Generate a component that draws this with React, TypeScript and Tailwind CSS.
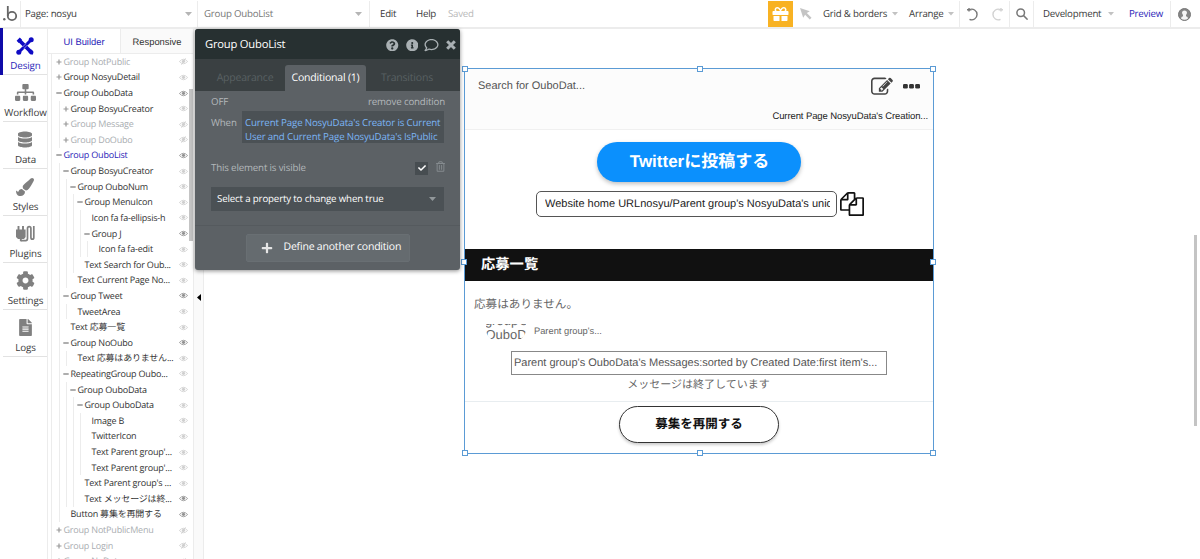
import React from "react";
import {
  FaCheck,
  FaCog,
  FaDatabase,
  FaFileAlt,
  FaGift,
  FaInfoCircle,
  FaPaintBrush,
  FaPlus,
  FaQuestionCircle,
  FaRegComment,
  FaRegTrashAlt,
  FaSitemap,
} from "react-icons/fa";

type Row = {
  depth: number;
  label: string;
  mark?: "+" | "-";
  tone?: "muted" | "active";
  eye?: "on" | "off";
};

const rows: Row[] = [
  { depth: 0, label: "Group NotPublic", mark: "+", tone: "muted", eye: "off" },
  { depth: 0, label: "Group NosyuDetail", mark: "+" },
  { depth: 0, label: "Group OuboData", mark: "-", eye: "on" },
  { depth: 1, label: "Group BosyuCreator", mark: "+" },
  { depth: 1, label: "Group Message", mark: "+", tone: "muted", eye: "off" },
  { depth: 1, label: "Group DoOubo", mark: "+", tone: "muted", eye: "off" },
  { depth: 0, label: "Group OuboList", mark: "-", tone: "active", eye: "on" },
  { depth: 1, label: "Group BosyuCreator", mark: "-" },
  { depth: 2, label: "Group OuboNum", mark: "-" },
  { depth: 3, label: "Group MenuIcon", mark: "-" },
  { depth: 4, label: "Icon fa fa-ellipsis-h" },
  { depth: 4, label: "Group J", mark: "-", eye: "on" },
  { depth: 5, label: "Icon fa fa-edit" },
  { depth: 3, label: "Text Search for Oub..." },
  { depth: 2, label: "Text Current Page No..." },
  { depth: 1, label: "Group Tweet", mark: "-", eye: "on" },
  { depth: 2, label: "TweetArea" },
  { depth: 1, label: "Text 応募一覧" },
  { depth: 1, label: "Group NoOubo", mark: "-", eye: "on" },
  { depth: 2, label: "Text 応募はありません..." },
  { depth: 1, label: "RepeatingGroup Oubo...", mark: "-" },
  { depth: 2, label: "Group OuboData", mark: "-" },
  { depth: 3, label: "Group OuboData", mark: "-" },
  { depth: 4, label: "Image B" },
  { depth: 4, label: "TwitterIcon" },
  { depth: 4, label: "Text Parent group'..." },
  { depth: 4, label: "Text Parent group'..." },
  { depth: 3, label: "Text Parent group's ..." },
  { depth: 3, label: "Text メッセージは終...", eye: "on" },
  { depth: 1, label: "Button 募集を再開する", eye: "on" },
  { depth: 0, label: "Group NotPublicMenu", mark: "+", tone: "muted", eye: "off" },
  { depth: 0, label: "Group Login", mark: "+", tone: "muted", eye: "off" },
  { depth: 0, label: "Group NoData", mark: "+", tone: "muted", eye: "off" },
];

function Eye({ state }: { state?: "on" | "off" }) {
  const color = state === "on" ? "text-[#929292]" : "text-[#cfcfcf]";
  return (
    <svg viewBox="0 0 9 7" className={`h-[7px] w-[9px] shrink-0 ${color}`} fill="none" stroke="currentColor">
      <path d="M.4 3.500Q4.500-1 8.600 3.500 4.500 8 .4 3.500z" strokeWidth=".8" />
      <circle cx="4.500" cy="3.300" r="1.600" fill="currentColor" stroke="none" />
      {state === "off" && <path d="M2.500 6.700l4-6.400" strokeWidth=".9" />}
    </svg>
  );
}

function TreeRow({ row }: { row: Row }) {
  const color =
    row.tone === "muted" ? "text-[#a9adb1]" : row.tone === "active" ? "text-[#2b25b8]" : "text-[#333]";
  return (
    <div className="flex h-[15.61px] shrink-0 items-center pr-[1.5px] pl-[4px]">
      {Array.from({ length: row.depth }, (_, i) => (
        <span key={i} className="flex h-full w-[7px] shrink-0 pl-[3px]">
          <span className="h-full w-px bg-[#ececec]" />
        </span>
      ))}
      <span className="flex w-[7.5px] shrink-0 items-center">
        {row.mark && (
          <svg viewBox="0 0 6 6" className="size-[6px]" stroke={row.mark === "-" ? "#777" : "#999"} strokeWidth="1.2">
            <path d={row.mark === "+" ? "M.5 3h5M3 .5v5" : "M.3 3h5.4"} />
          </svg>
        )}
      </span>
      <span className={`w-0 grow whitespace-nowrap text-[9px] leading-[14px] tracking-[-0.2px] ${color}`}>
        {row.label}
      </span>
      <Eye state={row.eye} />
    </div>
  );
}

function DesignIcon() {
  return (
    <svg viewBox="0 0 18 18" className="size-[18px]" fill="#0f0bc4" stroke="#0f0bc4">
      <path d="M3 3l12 12" strokeWidth="3.8" />
      <path d="M15 3L3 15" strokeWidth="3" />
      <path d="M6.500 10l3.500-3.500M8 11.500l3.500-3.500" stroke="#fff" strokeWidth=".5" />
      <path d="M.6 3.8L3.8.6 6 2.8 2.8 6zM12.2 15L15 12.2l2.4 2.4-.4 2.8-2.4.2z" stroke="none" />
      <circle cx="15.2" cy="2.8" r="2.500" stroke="none" />
      <circle cx="2.8" cy="15.2" r="2.500" stroke="none" />
      <circle cx="15.2" cy="15.2" r="1.900" stroke="none" />
    </svg>
  );
}

function PluginIcon() {
  return (
    <svg viewBox="0 0 19 17" className="h-[17px] w-[19px]" fill="none" stroke="#808080">
      <path d="M0 4.500h9.600v7.500L8 14H2l-2-2z" fill="#808080" stroke="none" />
      <path d="M2.500 1v4M7 1v4M4.800 13v3.300" strokeWidth="1.900" />
      <path d="M4.800 15.600h4.900q1.800 0 1.800-2V3.600q0-2 1.700-2t1.700 2v8.600q0 2 1.500 2t1.400-2V1" strokeWidth="1.700" />
    </svg>
  );
}

const rail = [
  { label: "Design", icon: <DesignIcon />, active: true },
  { label: "Workflow", icon: <FaSitemap className="h-[19px] w-[21px]" /> },
  { label: "Data", icon: <FaDatabase className="h-[17px] w-[14px]" /> },
  { label: "Styles", icon: <FaPaintBrush className="size-[18px]" /> },
  { label: "Plugins", icon: <PluginIcon /> },
  { label: "Settings", icon: <FaCog className="size-[19px]" /> },
  { label: "Logs", icon: <FaFileAlt className="h-[17px] w-[13px]" /> },
];

function Caret({ className = "h-[4px] w-[7px]" }: { className?: string }) {
  return (
    <svg viewBox="0 0 7 4" className={`shrink-0 ${className}`} fill="currentColor">
      <path d="M0 0h7L3.500 4z" />
    </svg>
  );
}

function TopBar() {
  return (
    <header className="flex h-[29px] shrink-0 items-stretch border-b-2 border-[#ececec] bg-white pt-px text-[9.700px] tracking-[-0.22px] whitespace-nowrap text-[#3a3a3a]">
      <div className="flex w-[21px] items-center border-r border-[#ececec] pl-[3px]">
        <svg viewBox="0 0 15 16" className="h-[16px] w-[15px]" fill="none" stroke="#666">
          <circle cx="1.300" cy="13.300" r="1.200" fill="#666" stroke="none" />
          <circle cx="9" cy="10" r="4.200" strokeWidth="1.800" />
          <path d="M4.800 0v10" strokeWidth="1.800" />
        </svg>
      </div>
      <div className="flex w-[177px] items-center justify-between border-r border-[#ececec] pr-[5px] pl-[4px]">
        <span>Page: nosyu</span>
        <Caret className="h-[4px] w-[7px] text-[#b5b5b5]" />
      </div>
      <div className="flex w-[172px] items-center justify-between border-r border-[#ececec] pr-[7px] pl-[6px] text-[#777]">
        <span>Group OuboList</span>
        <Caret className="h-[4px] w-[7px] text-[#b5b5b5]" />
      </div>
      <div className="flex grow items-center pl-[10px]">
        <span className="w-[36px]">Edit</span>
        <span className="w-[32px]">Help</span>
        <span className="text-[#b9b9b9]">Saved</span>
      </div>
      <div className="flex w-[25px] items-center justify-center bg-[#f8b223] text-white">
        <FaGift className="h-[16px] w-[17px]" />
      </div>
      <div className="flex w-[30px] items-center pl-[7px]">
        <svg viewBox="0 0 12 12" className="size-[12px]" fill="#c4c4c4">
          <path d="M0 0l9.800 3.300-3 1.800 4.700 4.700-1.700 1.700-4.700-4.700-1.900 3z" />
        </svg>
      </div>
      <div className="flex w-[86px] items-center">
        <span className="w-[69px]">Grid &amp; borders</span>
        <Caret className="h-[3.500px] w-[6px] text-[#c2c2c2]" />
      </div>
      <div className="flex w-[51px] items-center border-r border-[#ececec]">
        <span className="w-[39px]">Arrange</span>
        <Caret className="h-[3.500px] w-[6px] text-[#c2c2c2]" />
      </div>
      <div className="flex w-[50px] items-center gap-[12px] border-r border-[#ececec] pl-[6px]">
        <svg viewBox="0 0 13 13" className="size-[13px]" fill="none" stroke="#777" strokeWidth="1.400">
          <path d="M3.500 1.700a5.300 5.300 0 1 1 0 9.600M1 1.700h4.500M3 0v3.500" />
        </svg>
        <svg viewBox="0 0 13 13" className="size-[13px]" fill="none" stroke="#d2d2d2" strokeWidth="1.400">
          <path d="M9.500 1.700a5.300 5.300 0 1 0 0 9.600M12 1.700H7.500M10 0v3.500" />
        </svg>
      </div>
      <div className="flex w-[24px] items-center justify-center border-r border-[#ececec]">
        <svg viewBox="0 0 12 12" className="size-[12px]" fill="none" stroke="#777" strokeWidth="1.500">
          <circle cx="4.700" cy="4.700" r="3.800" />
          <path d="M7.600 7.600l4 4" />
        </svg>
      </div>
      <div className="flex w-[137px] items-center border-r border-[#ececec] pl-[9px]">
        <span className="w-[65px]">Development</span>
        <Caret className="h-[3.500px] w-[6px] text-[#c2c2c2]" />
        <span className="pl-[15px] text-[#2b25b8]">Preview</span>
      </div>
      <div className="flex w-[29px] items-center pl-[7px]">
        <svg viewBox="0 0 13 13" className="size-[13px]">
          <circle cx="6.500" cy="6.500" r="6" fill="#858585" stroke="#777" />
          <path d="M3 10.500q0-1.800 2-2.300V7Q4 5.800 4 4.500 4.200 2.400 6.500 2.400T9 4.500Q9 5.800 8 7v1.200q2 .5 2 2.300-1.500 1.300-3.500 1.300T3 10.500z" fill="#f4f4f4" />
        </svg>
      </div>
    </header>
  );
}

function Rail() {
  return (
    <nav className="flex w-[48px] shrink-0 flex-col border-r border-[#ececec] text-[#808080]">
      {rail.map((item) => (
        <div
          key={item.label}
          className={`flex h-[47px] shrink-0 flex-col items-center border-l-[3px] ${
            item.active ? "-mt-px border-l-[#0f0ba8]" : "border-l-transparent"
          }`}
        >
          <div className="flex h-[30px] w-[45px] items-center justify-center pt-[5px]">{item.icon}</div>
          <span
            className={`grow pl-px text-[9.800px] leading-[15px] tracking-[-0.120px] ${item.active ? "text-[#2b25b8]" : "text-[#3a3a3a]"}`}
          >
            {item.label}
          </span>
          <div className="h-px w-full bg-[#e2e2e2]" />
        </div>
      ))}
    </nav>
  );
}

function TreePanel() {
  return (
    <aside className="flex w-[146px] shrink-0 flex-col border-r border-[#ececec]">
      <div className="flex h-[25px] shrink-0 border-b border-[#ececec] font-['Liberation_Sans'] text-[9.400px] leading-[25px]">
        <span className="w-[72px] text-center text-[#2b25b8]">UI Builder</span>
        <span className="grow border-l border-[#ececec] bg-[#fafafa] text-center text-[#333]">Responsive</span>
      </div>
      <div className="ml-[3px] flex min-h-0 grow overflow-hidden border-l border-[#ececec]">
        <div className="flex w-[137px] flex-col">
          {rows.map((row, i) => (
            <TreeRow key={i} row={row} />
          ))}
        </div>
        <div className="mt-[35px] h-[152px] w-[4px] bg-[#c4c4c4]" />
      </div>
    </aside>
  );
}

function Popup() {
  return (
    <section className="absolute top-[29px] left-[195px] flex h-[241px] w-[265px] flex-col overflow-hidden rounded-[3px] bg-[#5c6165] shadow-[0_1px_4px_rgba(0,0,0,0.45)]">
      <div className="flex h-[30px] shrink-0 items-center bg-[#273031] pt-[2px] pr-[4px] pl-[10px]">
        <span className="grow text-[11.200px] tracking-[-0.2px] text-white">Group OuboList</span>
        <div className="flex items-center text-[#a9b0b3]">
          <FaQuestionCircle className="mr-[7px] size-[12.500px]" />
          <FaInfoCircle className="mr-[6px] size-[12.500px]" />
          <FaRegComment className="mr-[7px] h-[14px] w-[15px]" />
          <svg viewBox="0 0 10 10" className="size-[10px]" stroke="currentColor" strokeWidth="3">
            <path d="M1.200 1.200l7.600 7.600M8.800 1.200L1.200 8.800" />
          </svg>
        </div>
      </div>
      <div className="flex h-[32px] shrink-0 items-end bg-[#3a4042] text-center text-[10.500px] leading-[26px] tracking-[-0.2px] text-[#596063]">
        <span className="w-[90px] pl-[10px]">Appearance</span>
        <span className="w-[81px] rounded-t-[3px] bg-[#5c6165] text-white">Conditional (1)</span>
        <span className="w-[82px]">Transitions</span>
      </div>
      <div className="flex h-[135px] shrink-0 flex-col border-b border-[#555a5e] pr-[15px] pl-[16px] text-[9.700px] tracking-[-0.150px] text-[#b3b8bb]">
        <div className="flex h-[20px] items-center justify-between pt-[2px]">
          <span>OFF</span>
          <span>remove condition</span>
        </div>
        <div className="flex h-[32px]">
          <span className="w-[31px] pt-[4px] leading-[15px]">When</span>
          <div className="w-[202px] bg-[#4b5155] pt-[5px] pl-[3px] leading-[13.500px] whitespace-nowrap text-[#7bb5f5]">
            Current Page NosyuData's Creator is Current
            <br />
            User and Current Page NosyuData's IsPublic
          </div>
        </div>
        <div className="mt-[18px] flex h-[14px] items-center">
          <span className="grow">This element is visible</span>
          <span className="flex size-[13px] items-center justify-center bg-[#474d51] text-white">
            <FaCheck className="size-[8px]" />
          </span>
          <FaRegTrashAlt className="-mt-[3px] mr-0 ml-[8px] h-[11px] w-[9px] text-[#858b8f]" />
        </div>
        <div className="mt-[12px] flex h-[24px] w-[233px] items-center justify-between bg-[#4b5155] pr-[8px] pl-[6px] text-white">
          <span>Select a property to change when true</span>
          <Caret className="h-[4px] w-[7px] text-[#92989b]" />
        </div>
      </div>
      <div className="mx-auto mt-[8px] flex h-[28px] w-[164px] items-center rounded-[2px] border border-[#696f73] bg-[#656b6f] pl-[14px] text-[10.500px] tracking-[-0.2px] whitespace-nowrap text-white">
        <FaPlus className="mr-[11px] size-[12px] shrink-0 text-[#e5e5e5]" />
        <span>Define another condition</span>
      </div>
    </section>
  );
}

const handles = [
  "-top-[3px] -left-[3px]",
  "-top-[3px] left-[232px]",
  "-top-[3px] -right-[3px]",
  "top-[190px] -left-[4px]",
  "top-[190px] -right-[3px]",
  "-bottom-[3px] -left-[3px]",
  "-bottom-[3px] left-[232px]",
  "-bottom-[3px] -right-[3px]",
];

function SelectedGroup() {
  return (
    <div className="absolute top-[68px] left-[464px] h-[386px] w-[470px] border border-[#5b9bd5] bg-white font-['Liberation_Sans','Noto_Sans_CJK_JP',sans-serif]">
      <div className="flex h-full flex-col">
        <div className="flex h-[61px] shrink-0 flex-col border-b border-[#f0f0f0] bg-[#fcfcfc] pl-[13px]">
          <div className="flex h-[34px] items-center">
            <span className="grow text-[11px] text-[#555]">Search for OuboDat...</span>
            <svg viewBox="0 0 1792 1792" className="mt-[2px] size-[22px]" fill="#444">
              <path d="M888 1184l116-116-152-152-116 116v56h96v96h56zm440-720q-16-16-33 1l-350 350q-17 17-1 33t33-1l350-350q17-17 1-33zm80 594v190q0 119-84.500 203.500t-203.500 84.500h-832q-119 0-203.500-84.500t-84.500-203.500v-832q0-119 84.500-203.500t203.500-84.500h832q63 0 117 25 15 7 18 23 3 17-9 29l-49 49q-14 14-32 8-23-6-45-6h-832q-66 0-113 47t-47 113v832q0 66 47 113t113 47h832q66 0 113-47t47-113v-126q0-13 9-22l64-64q15-15 35-7t20 29zm-96-738l288 288-672 672h-288v-288zm444 132l-92 92-288-288 92-92q28-28 68-28t68 28l152 152q28 28 28 68t-28 68z" />
            </svg>
            <svg viewBox="0 0 17 5" className="mr-[13px] ml-[10px] h-[5px] w-[17px]" fill="#333">
              <rect width="4.800" height="4.600" rx="1.300" />
              <rect x="6.100" width="4.800" height="4.600" rx="1.300" />
              <rect x="12.200" width="4.800" height="4.600" rx="1.300" />
            </svg>
          </div>
          <div className="pt-[6px] pr-[5px] text-right text-[9.500px] leading-[15px] tracking-[-0.100px] text-[#222]">
            Current Page NosyuData's Creation...
          </div>
        </div>
        <div className="flex h-[119px] shrink-0 flex-col pt-[12px]">
          <div className="mx-auto flex h-[40px] w-[204px] items-center justify-center rounded-full bg-[#0b90fd] pl-px text-[17px] font-bold text-white shadow-[0_2px_4px_rgba(0,0,0,0.25)]">
            Twitterに投稿する
          </div>
          <div className="mt-[9px] flex items-center pl-[71px]">
            <div className="h-[26px] w-[301px] rounded-[5px] border border-[#555] pr-[6px] pl-[8px] text-[11px] leading-[24px] text-[#222]">
              <div className="overflow-hidden whitespace-nowrap">Website home URLnosyu/Parent group's NosyuData's unique id</div>
            </div>
            <svg viewBox="0 0 1792 1792" className="ml-[3px] size-[24px]" fill="#111">
              <path d="M1696 384q40 0 68 28t28 68v1216q0 40-28 68t-68 28h-960q-40 0-68-28t-28-68v-288h-544q-40 0-68-28t-28-68v-672q0-40 20-88t48-76l408-408q28-28 76-48t88-20h416q40 0 68 28t28 68v328q68-40 128-40h416zm-544 213l-299 299h299v-299zm-640-384l-299 299h299v-299zm196 647l316-316v-416h-384v416q0 40-28 68t-68 28h-416v640h512v-256q0-40 20-88t48-76zm956 804v-1152h-384v416q0 40-28 68t-68 28h-416v640h896z" />
            </svg>
          </div>
        </div>
        <div className="h-[32px] shrink-0 bg-[#111] pl-[16px] text-[14.300px] leading-[32px] font-bold text-white">応募一覧</div>
        <div className="flex h-[121px] shrink-0 flex-col border-b border-[#e8edf0] pt-[14px] text-[#666]">
          <div className="pl-[9px] text-[11.600px] leading-[20px]">応募はありません。</div>
          <div className="mt-[9px] flex h-[18px] pl-[21px]">
            <div className="flex h-[17px] w-[40px] flex-col items-center justify-end overflow-hidden rounded-b-[12px] text-[13px] leading-[14px] whitespace-nowrap">
              <span>group's</span>
              <span className="-mb-[1px]">OuboD</span>
            </div>
            <span className="pl-[8px] text-[9.300px] leading-[15px]">Parent group's...</span>
          </div>
          <div className="mt-[9px] ml-[46px] h-[24px] w-[376px] shrink-0 border border-[#888] pl-[2px] text-[11px] leading-[23px] whitespace-nowrap text-[#555]">
            Parent group's OuboData's Messages:sorted by Created Date:first item's...
          </div>
          <div className="pr-px text-center text-[11px] leading-[21px]">メッセージは終了しています</div>
        </div>
        <div className="mx-auto mt-[4px] flex h-[37px] w-[160px] shrink-0 items-center justify-center rounded-full border border-[#333] bg-white text-[12.500px] font-bold text-[#111] shadow-[0_2px_3px_rgba(0,0,0,0.2)]">
          募集を再開する
        </div>
      </div>
      {handles.map((pos) => (
        <span key={pos} className={`absolute size-[6px] border border-[#5b9bd5] bg-white ${pos}`} />
      ))}
    </div>
  );
}

export default function App() {
  return (
    <div className="relative flex h-[559px] w-[1200px] flex-col overflow-hidden bg-white font-['Open_Sans','Noto_Sans_CJK_JP',sans-serif] [text-rendering:geometricPrecision]">
      <TopBar />
      <div className="flex min-h-0 grow">
        <Rail />
        <TreePanel />
        <div className="flex w-[10px] shrink-0 justify-center border-r border-[#ececec] bg-[#fafafa] pt-[265px]">
          <svg viewBox="0 0 4 7" className="h-[7px] w-[4px]">
            <path d="M4 0v7L0 3.500z" />
          </svg>
        </div>
        <main className="flex grow justify-end pt-[206px]">
          <div className="mr-[3px] h-[191px] w-[3px] bg-[#c4c4c4]" />
        </main>
      </div>
      <SelectedGroup />
      <Popup />
    </div>
  );
}
